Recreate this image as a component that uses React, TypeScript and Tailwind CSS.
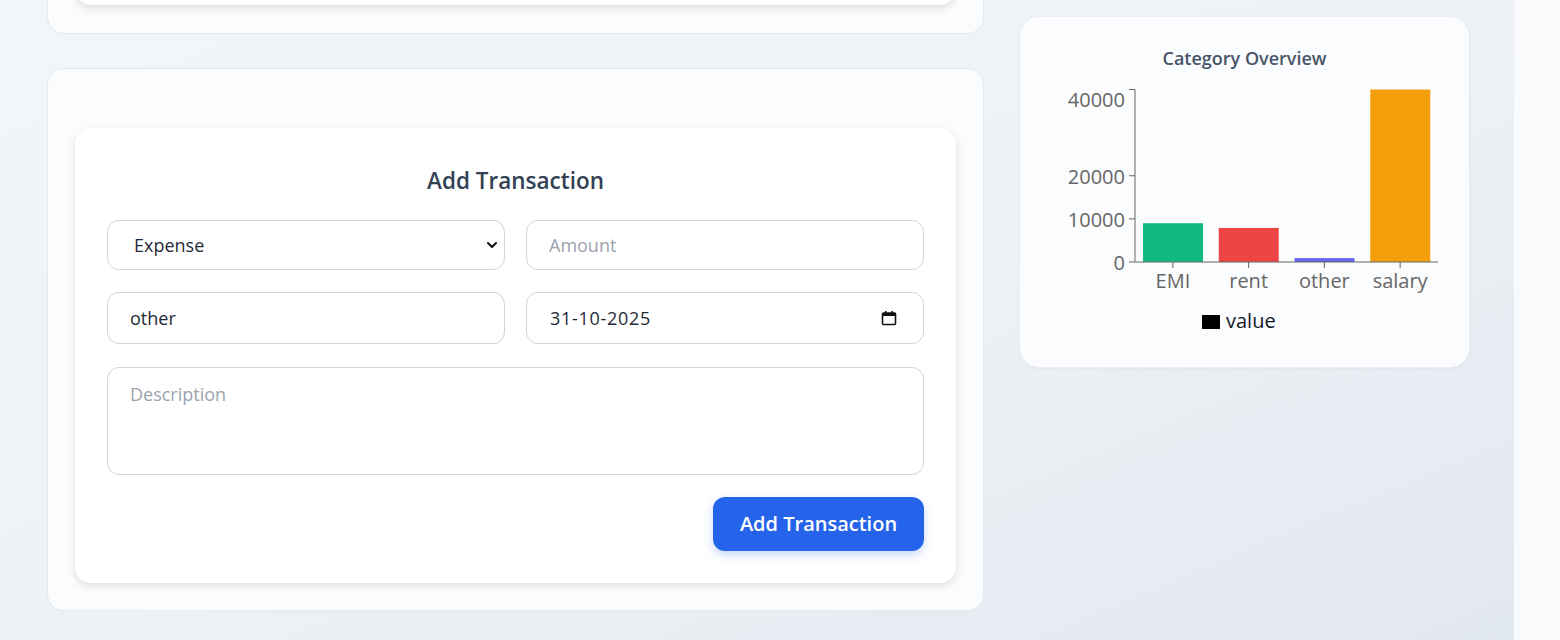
import React from 'react';

const FONT = { fontFamily: '"Open Sans", "Noto Sans", Arial, sans-serif' };

type Bar = { name: string; value: number; color: string };

const DATA: Bar[] = [
  { name: 'EMI', value: 9000, color: '#10b981' },
  { name: 'rent', value: 7900, color: '#ef4444' },
  { name: 'other', value: 900, color: '#6366f1' },
  { name: 'salary', value: 40000, color: '#f59e0b' },
];

// chart geometry (svg coords)
const AX_X = 91;
const AX_Y = 190;
const AX_END = 394;
const PX_PER = 172.5 / 40000;

const CategoryChart: React.FC = () => {
  const band = (AX_END - AX_X) / DATA.length;
  const yTicks = [
    { v: 0, label: '0', ly: 190 },
    { v: 10000, label: '10000', ly: 147 },
    { v: 20000, label: '20000', ly: 104 },
    { v: 40000, label: '40000', ly: 27 },
  ];
  return (
    <svg width={403} height={270} className="mt-[2px] block">
      {DATA.map((d, i) => {
        const h = d.value * PX_PER;
        const x = AX_X + band * i + 8;
        return <rect key={d.name} x={x} y={AX_Y - h} width={60} height={h} fill={d.color} />;
      })}
      {/* y axis */}
      <line x1={AX_X} y1={17.5} x2={AX_X} y2={AX_Y} stroke="#666" />
      {yTicks.map((t) => {
        const y = AX_Y - t.v * PX_PER;
        return (
          <g key={t.v}>
            <line x1={AX_X - 6} y1={y} x2={AX_X} y2={y} stroke="#666" />
            <text x={AX_X - 10} y={t.ly} textAnchor="end" dominantBaseline="central" fill="#666" fontSize={20} style={FONT}>
              {t.label}
            </text>
          </g>
        );
      })}
      {/* x axis */}
      <line x1={AX_X} y1={AX_Y} x2={AX_END} y2={AX_Y} stroke="#666" />
      {DATA.map((d, i) => {
        const cx = AX_X + band * i + band / 2;
        return (
          <g key={d.name}>
            <line x1={cx} y1={AX_Y} x2={cx} y2={AX_Y + 6} stroke="#666" />
            <text x={cx} y={208} textAnchor="middle" dominantBaseline="central" fill="#666" fontSize={20} style={FONT}>
              {d.name}
            </text>
          </g>
        );
      })}
      {/* legend */}
      <rect x={158} y={243} width={18} height={14} fill="#000" />
      <text x={182} y={248} dominantBaseline="central" fill="#111827" fontSize={20} style={FONT}>
        value
      </text>
    </svg>
  );
};

const inputCls =
  'w-full rounded-xl border border-[#cbd5e1] bg-white px-[22px] text-[18px] text-[#1f2937] placeholder:text-[#9ca3af] outline-none';

const App: React.FC = () => {
  return (
    <div style={FONT} className="flex h-[640px] w-[1560px] overflow-hidden bg-[#f8fafc]">
      <div className="flex h-full w-[1514px] gap-[35px] bg-gradient-to-br from-[#f2f5f9] via-[#eef2f6] to-[#e2e8f0] pl-[47px]">
        {/* left column */}
        <div className="flex w-[937px] flex-col">
          {/* previous card, scrolled mostly out of view */}
          <div className="-mt-[166px] h-[200px] rounded-2xl border border-[#e2e8f0] bg-[#fbfcfd] px-[27px] pb-7">
            <div className="h-full rounded-2xl bg-white shadow-[0_3px_8px_rgba(0,0,0,0.13)]" />
          </div>

          <div className="mt-[34px] rounded-2xl border border-[#e2e8f0] bg-[#fbfcfd] px-[27px] pb-[27px] pt-[59px]">
            <div className="rounded-2xl bg-white px-8 pb-8 pt-[6px] shadow-[0_3px_8px_rgba(0,0,0,0.12)]">
              <h2 className="mb-[24px] mt-[32px] text-center text-[22.5px] font-semibold leading-[30px] text-[#334155]">
                Add Transaction
              </h2>
              <div className="grid grid-cols-2 gap-x-[21px] gap-y-[22px]">
                <div className="relative">
                  <select className={`${inputCls} h-[50px] appearance-none pl-[26px]`} defaultValue="expense">
                    <option value="expense">Expense</option>
                    <option value="income">Income</option>
                  </select>
                  <svg
                    className="pointer-events-none absolute right-[7px] top-1/2 -translate-y-1/2"
                    width="12"
                    height="12"
                    viewBox="0 0 12 12"
                  >
                    <path d="M2 4l4 4 4-4" fill="none" stroke="#111" strokeWidth="2" strokeLinecap="round" strokeLinejoin="round" />
                  </svg>
                </div>
                <input className={`${inputCls} h-[50px]`} placeholder="Amount" />
                <input className={`${inputCls} h-[52px]`} defaultValue="other" />
                <div className={`${inputCls} flex h-[52px] items-center justify-between pl-[23px] pr-[26px] tracking-[0.7px]`}>
                  <span>31-10-2025</span>
                  <svg width="16" height="16" viewBox="0 0 16 16">
                    <rect x="1.5" y="3" width="13" height="11.5" rx="1" fill="none" stroke="#111" strokeWidth="1.6" />
                    <rect x="1.5" y="3" width="13" height="3" fill="#111" />
                    <rect x="4" y="1" width="1.6" height="3" fill="#111" />
                    <rect x="10.4" y="1" width="1.6" height="3" fill="#111" />
                  </svg>
                </div>
                <textarea
                  className={`${inputCls} col-span-2 mt-px h-[108px] resize-none py-3 leading-[28px]`}
                  placeholder="Description"
                />
              </div>
              <div className="mt-[22px] flex justify-end">
                <button className="h-[54px] w-[211px] rounded-xl bg-[#2563eb] text-[20px] font-semibold text-white shadow-[0_4px_10px_rgba(37,99,235,0.25)]">
                  Add Transaction
                </button>
              </div>
            </div>
          </div>
        </div>

        {/* right column */}
        <div className="w-[451px] pt-[16px]">
          <div className="rounded-[20px] border border-[#e8edf3] bg-[#fbfcfd] px-6 pb-[25px] pt-[29px] shadow-[0_1px_3px_rgba(0,0,0,0.04)]">
            <div className="text-center text-[18px] font-semibold leading-6 text-[#475569]">Category Overview</div>
            <CategoryChart />
          </div>
        </div>
      </div>
    </div>
  );
};

export default App;
